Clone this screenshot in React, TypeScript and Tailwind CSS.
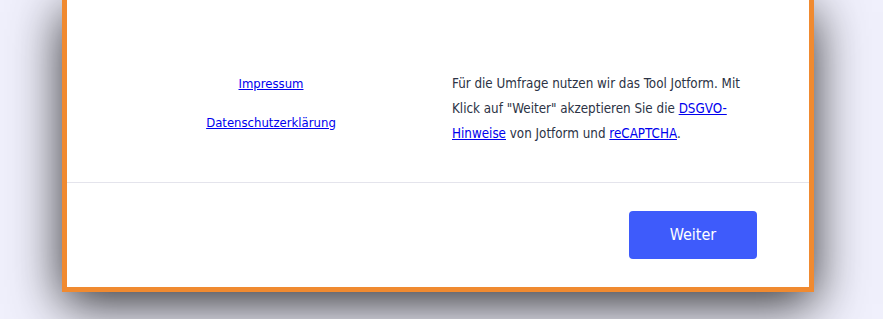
export default function App() {
  return (
    <div className="h-[319px] w-full overflow-hidden bg-[#f0f0fc] font-['DejaVu_Sans_Condensed','DejaVu_Sans',sans-serif]">
      <div className="ml-[62px] w-[752px] border-[5px] border-t-0 border-[#f08a30] bg-white shadow-[0_12px_48px_rgba(0,0,0,0.8)]">
        {/* Links + Hinweis */}
        <div className="flex h-[183px] pt-[71px] border-b border-[#e4e4ec]">
          <div className="ml-[69px] w-[270px] flex flex-col items-center gap-[14px] text-[13px] leading-[25px]">
            <a href="#" className="text-[#0000ee] underline">Impressum</a>
            <a href="#" className="text-[#0000ee] underline">Datenschutzerklärung</a>
          </div>
          <p className="ml-[46px] w-[300px] text-[13.3px] leading-[25px] text-[#2c3345]">
            Für die Umfrage nutzen wir das Tool Jotform. Mit Klick auf "Weiter" akzeptieren Sie die{' '}
            <a href="#" className="text-[#0000ee] underline">DSGVO-Hinweise</a> von Jotform und{' '}
            <a href="#" className="text-[#0000ee] underline">reCAPTCHA</a>.
          </p>
        </div>
        {/* Footer */}
        <div className="flex justify-end pt-[28px] pb-[28px] pr-[52px]">
          <button className="h-[48px] w-[128px] rounded-[4px] bg-[#3e5bfb] text-[16px] text-white">
            Weiter
          </button>
        </div>
      </div>
    </div>
  )
}
